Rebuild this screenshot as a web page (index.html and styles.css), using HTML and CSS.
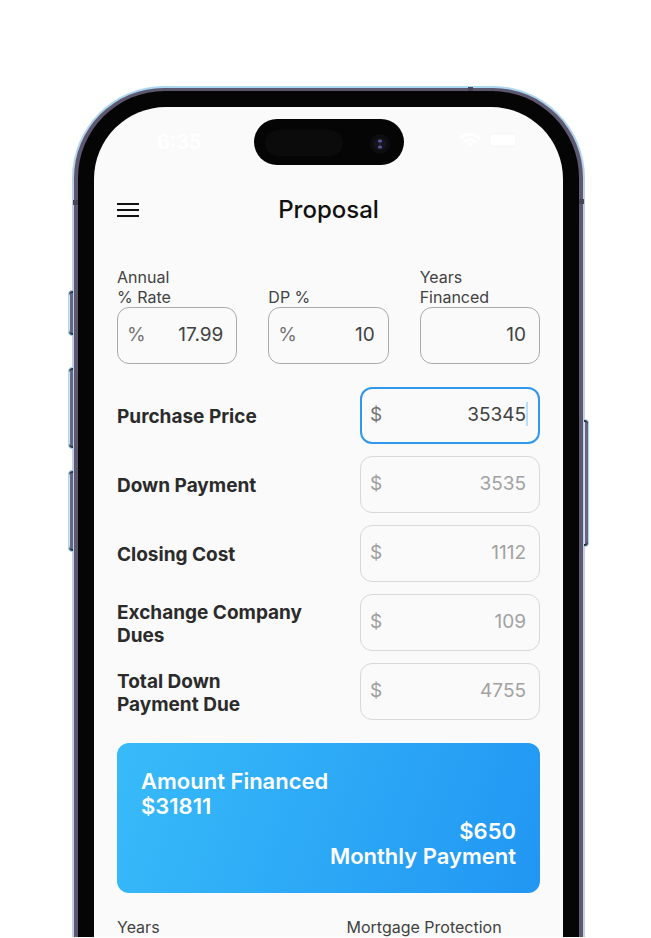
FILE: index.html
```html
<!DOCTYPE html>
<html lang="en">
<head>
<meta charset="utf-8">
<meta name="viewport" content="width=device-width, initial-scale=1">
<title>Proposal</title>
<link rel="stylesheet" href="styles.css">
</head>
<body>
<div class="phone">
  <span class="side side-mute"></span>
  <span class="side side-up"></span>
  <span class="side side-down"></span>
  <span class="side side-power"></span>
  <div class="rim">
    <span class="antenna antenna-top"></span>
    <span class="antenna antenna-left"></span>
    <span class="antenna antenna-right"></span>
    <div class="bezel">
      <div class="screen">
        <div class="status">
          <span class="time">6:35</span>
          <div class="island">
            <svg width="150" height="46" viewBox="0 0 150 46" aria-hidden="true">
              <rect x="11" y="11" width="78" height="26" rx="13" fill="#0b0b0b"/>
              <circle cx="126" cy="25" r="10" fill="#0d0d10"/>
              <circle cx="126" cy="25" r="6" fill="#15151f"/>
              <ellipse cx="126" cy="22" rx="2" ry="1.5" fill="#5c5aa0"/>
              <ellipse cx="126" cy="28" rx="2" ry="1.5" fill="#5c5aa0"/>
              <circle cx="126" cy="25" r="1" fill="#25253c"/>
            </svg>
          </div>
          <svg class="signals" width="92" height="18" viewBox="0 0 92 18" aria-hidden="true">
            <g fill="#f9f9f9"><circle cx="3" cy="14" r="2"/><circle cx="10" cy="14" r="2"/><circle cx="17" cy="14" r="2"/><circle cx="24" cy="14" r="2"/></g>
            <g fill="none" stroke="#fff" stroke-width="3">
              <path d="M34 7.500Q44 -1 54 7.500"/>
              <path d="M38 11Q44 6 50 11"/>
            </g>
            <path d="M41 13Q44 11 47 13L44 16.500Z" fill="#fff"/>
            <rect x="63" y="2" width="27" height="14" rx="4" fill="none" stroke="#f8f8f8"/>
            <rect x="65" y="4" width="24" height="10" rx="2" fill="#fff"/>
          </svg>
        </div>

        <header class="bar">
          <button class="menu" type="button" aria-label="Menu">
            <svg width="22" height="14" viewBox="0 0 22 14" aria-hidden="true"><path d="M0 1H22M0 7H22M0 13H22" stroke="#111" stroke-width="2"/></svg>
          </button>
          <h1>Proposal</h1>
        </header>

        <form class="form">
          <div class="rates">
            <div class="rate">
              <label for="rate">Annual<br>% Rate</label>
              <div class="field"><span>%</span><input id="rate" type="text" value="17.99"></div>
            </div>
            <div class="rate">
              <label for="dp">DP %</label>
              <div class="field"><span>%</span><input id="dp" type="text" value="10"></div>
            </div>
            <div class="rate">
              <label for="years">Years<br>Financed</label>
              <div class="field"><input id="years" type="text" value="10"></div>
            </div>
          </div>

          <div class="amounts">
            <div class="row">
              <label for="price">Purchase Price</label>
              <div class="field active"><span>$</span><input id="price" type="text" value="35345"><i class="caret"></i></div>
            </div>
            <div class="row">
              <label for="down">Down Payment</label>
              <div class="field locked"><span>$</span><input id="down" type="text" value="3535" disabled></div>
            </div>
            <div class="row">
              <label for="closing">Closing Cost</label>
              <div class="field locked"><span>$</span><input id="closing" type="text" value="1112" disabled></div>
            </div>
            <div class="row">
              <label for="dues">Exchange Company Dues</label>
              <div class="field locked"><span>$</span><input id="dues" type="text" value="109" disabled></div>
            </div>
            <div class="row">
              <label for="total">Total Down<br>Payment Due</label>
              <div class="field locked"><span>$</span><input id="total" type="text" value="4755" disabled></div>
            </div>
          </div>

          <section class="card">
            <p>Amount Financed<br>$31811</p>
            <p class="monthly">$650<br>Monthly Payment</p>
          </section>

          <div class="more">
            <span>Years</span>
            <span>Mortgage Protection</span>
          </div>
        </form>
      </div>
    </div>
  </div>
</div>
</body>
</html>
```
FILE: styles.css
```css
* { box-sizing: border-box; }

body {
  margin: 0;
  padding: 86px 66px 1px 72px;
  background: #fff;
  color: #424242;
  font-family: Inter, "Liberation Sans", sans-serif;
  font-size: 16px;
  line-height: 20px;
}

h1, p { margin: 0; }

/* Handset */
.phone {
  position: relative;
  padding: 2px 2px 0;
  border-radius: 92px 92px 0 0;
  background: linear-gradient(#a9d8f0, #c3d0e6 140px);
}

.rim {
  position: relative;
  padding: 3px 4px 0;
  border-radius: 90px 90px 0 0;
  background: #5d576f;
}

.bezel {
  position: relative;
  padding: 16px 16px 0;
  border-radius: 87px 87px 0 0;
  background: #050505;
}

.screen {
  padding: 12px 23px 0;
  border-radius: 72px 72px 0 0;
  background: #fafafa;
}

.side {
  position: absolute;
  width: 6px;
  border: 1px solid #a6d8f8;
  background: #6b647c;
  box-shadow: inset 0 2px #333, inset 0 -2px #333, inset 1px 0 #d5dff0;
}

.side-mute, .side-up, .side-down { left: -4px; border-radius: 4px 0 0 4px; }
.side-mute { top: 204px; height: 46px; }
.side-up { top: 281px; height: 82px; }
.side-down { top: 384px; height: 82px; }
.side-power { right: -4px; top: 333px; height: 128px; border-radius: 0 4px 4px 0; }

.antenna { position: absolute; background: #4a4658; }
.antenna-top { top: -1px; right: 110px; width: 5px; height: 4px; }
.antenna-left { top: 112px; left: -1px; width: 5px; height: 5px; }
.antenna-right { top: 111px; right: -1px; width: 5px; height: 5px; }

/* Status bar */
.status {
  display: grid;
  grid-template-columns: 1fr auto 1fr;
  align-items: center;
}

.time {
  justify-self: center;
  padding-right: 12px;
  color: #fff;
  font-size: 20px;
  font-weight: 600;
}

.island {
  height: 46px;
  border-radius: 23px;
  background: #050505;
}

.signals { justify-self: center; margin-bottom: 4px; }

/* Title bar */
.bar {
  display: grid;
  grid-template-columns: 1fr auto 1fr;
  align-items: center;
  height: 90px;
}

.menu {
  display: flex;
  justify-self: start;
  padding: 0;
  border: 0;
  background: none;
}

h1 {
  color: #111;
  font-size: 24px;
  font-weight: 500;
  line-height: 30px;
}

/* Form */
.form { padding-top: 12px; }

.rates {
  display: grid;
  grid-template-columns: repeat(3, minmax(0, 1fr));
  align-items: end;
  gap: 31px;
}

.rate label { display: block; }

.field {
  position: relative;
  display: flex;
  align-items: center;
  height: 57px;
  padding: 0 13px 2px 9px;
  border: 1px solid #aaa;
  border-radius: 12px;
  color: #757575;
  font-size: 19px;
}

.field input {
  flex: 1;
  min-width: 0;
  padding: 0;
  border: 0;
  outline: 0;
  background: none;
  color: #424242;
  font: inherit;
  text-align: right;
}

.active { border: 2px solid #2f98ee; padding: 0 12px 2px 8px; }

.caret {
  position: absolute;
  top: 13px;
  right: 10px;
  width: 2px;
  height: 24px;
  background: #bbdefb;
}

.locked { border-color: #d8d8d8; color: #9e9e9e; }
.field.locked input { color: #a2a2a2; }

.amounts {
  display: grid;
  gap: 12px;
  padding: 23px 0;
}

.row {
  display: grid;
  grid-template-columns: 1fr 180px;
  align-items: center;
  column-gap: 40px;
}

.row label {
  padding-top: 2px;
  color: #2b2b2b;
  font-size: 19px;
  font-weight: 700;
  line-height: 23px;
}

/* Summary */
.card {
  padding: 26px 24px 24px;
  border-radius: 12px;
  background: linear-gradient(110deg, #38bbf9, #2196f3);
  color: #fff;
  font-size: 22px;
  font-weight: 600;
  line-height: 25px;
}

.monthly { text-align: right; }

.more {
  display: grid;
  grid-template-columns: 1fr 1fr;
  gap: 36px;
  padding-top: 24px;
}
```
